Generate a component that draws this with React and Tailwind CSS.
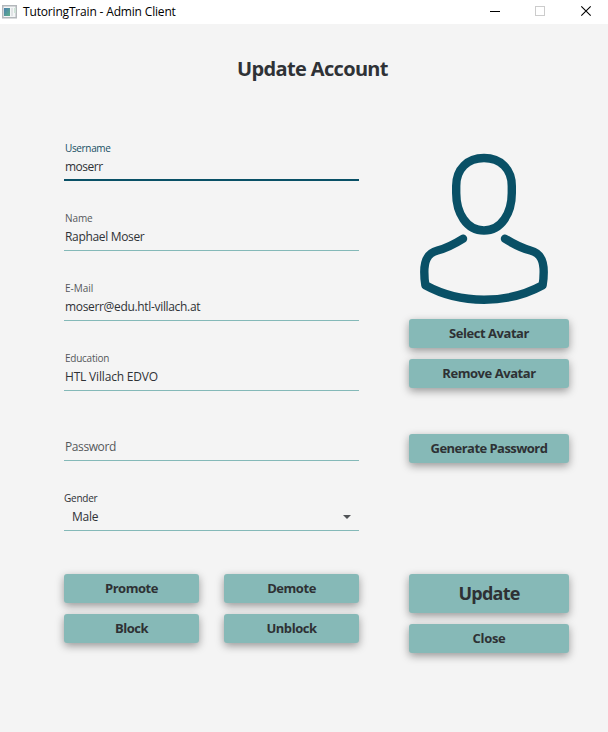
import React from "react";

function Field({ label, labelClass = "", value, valueClass = "tracking-[-0.33px]", focused = false }) {
  return (
    <div
      className={
        "flex h-[70px] flex-col justify-end " +
        (focused ? "border-b-2 border-[#095066]" : "border-b border-[#84b9b8]")
      }
    >
      {label && (
        <div className={"h-[12px] whitespace-nowrap pl-px text-[10px] leading-[12px] " + labelClass}>{label}</div>
      )}
      <div
        className={
          "mt-[4px] whitespace-nowrap pl-px text-[12px] leading-[18px] " +
          (focused ? "h-[21px] " : "h-[22px] ") +
          valueClass
        }
      >
        {value}
      </div>
    </div>
  );
}

function Button({ children, className = "h-[29px] text-[13px] tracking-[-0.45px]" }) {
  return (
    <button
      className={
        "flex w-full items-center justify-center whitespace-nowrap rounded-[3px] bg-[#86b9b7] font-bold text-[#2e3134] shadow-[0_3px_9px_rgba(0,0,0,0.38)] " +
        className
      }
    >
      {children}
    </button>
  );
}

function AppIcon() {
  return (
    <svg width="16" height="14" viewBox="0 0 16 14" className="block">
      <defs>
        <linearGradient id="pane" x1="0" y1="0" x2="1" y2="1">
          <stop offset="0" stopColor="#4a7fae" />
          <stop offset="1" stopColor="#5fb08a" />
        </linearGradient>
      </defs>
      <rect x="0.75" y="0.75" width="13.5" height="12" fill="#f4f6f7" stroke="#b3b7bb" strokeWidth="1.5" />
      <rect x="2" y="3" width="6" height="8" fill="url(#pane)" />
      <rect x="9" y="3" width="2" height="8" fill="#e1e4e6" />
      <rect x="12" y="3" width="2" height="5" fill="#cfe3d8" />
    </svg>
  );
}

function TitleBar() {
  return (
    <header className="flex h-6 items-center bg-white pl-[2px] text-[12px] text-black">
      <AppIcon />
      <span className="ml-[5px] whitespace-nowrap leading-[16px] tracking-[-0.17px]">TutoringTrain - Admin Client</span>
      <svg width="118" height="24" viewBox="0 0 118 24" className="ml-auto block" fill="none">
        <path d="M0 11.5h10" stroke="#000" />
        <rect x="45.5" y="6.5" width="9" height="9" stroke="#ccc" />
        <path d="M91.3 6.3l9.4 9.4M100.7 6.3l-9.4 9.4" stroke="#000" strokeWidth="1.1" />
      </svg>
    </header>
  );
}

function Avatar() {
  return (
    <svg
      width="160"
      height="160"
      viewBox="409 149 160 160"
      className="block"
      fill="none"
      stroke="#095066"
      strokeWidth="8.4"
      strokeLinecap="round"
      strokeLinejoin="round"
    >
      <path d="M484 158C500.500 158 511.800 169 511.800 186V193C511.800 213 501.500 230.500 484 230.500S456.200 213 456.200 193V186C456.200 169 467.500 158 484 158Z" />
      <path d="M463 238.700C455 243.700 447 248 437.500 250.500C426 253.500 424.300 263 424.300 272C424.300 277 424.700 281.500 425.400 285.300C443 295 463 299.700 484 299.700S525 295 542.600 285.300C543.300 281.500 543.700 277 543.700 272C543.700 263 542 253.500 530.500 250.500C521 248 513 243.700 505 238.700" />
    </svg>
  );
}

export default function App() {
  return (
    <div className="h-[732px] w-[608px] overflow-hidden bg-[#f4f4f4] font-['Open_Sans','Noto_Sans',sans-serif] text-[#2f3236]">
      <TitleBar />
      <h1 className="mt-[31px] pl-[17px] text-center text-[20px] font-bold leading-[28px] tracking-[-0.65px]">Update Account</h1>
      <main className="mt-[28px] flex gap-[50px] pl-[64px]">
        <section className="w-[295px]">
          <Field
            label="Username"
            labelClass="text-[#174f64] tracking-[-0.35px]"
            value="moserr"
            valueClass="tracking-[-0.5px]"
            focused
          />
          <Field label="Name" labelClass="text-[#55585b] tracking-[-0.1px]" value="Raphael Moser" />
          <Field label="E-Mail" labelClass="text-[#55585b]" value="moserr@edu.htl-villach.at" />
          <Field
            label="Education"
            labelClass="text-[#55585b] tracking-[-0.25px]"
            value="HTL Villach EDVO"
            valueClass="tracking-[-0.18px]"
          />
          <Field value="Password" valueClass="text-[#55585b] tracking-[-0.4px]" />
          <div className="flex h-[70px] flex-col justify-end border-b border-[#84b9b8]">
            <div className="h-[12px] text-[10px] leading-[12px] tracking-[-0.25px]">Gender</div>
            <div className="mt-[4px] flex h-[22px] justify-between pl-[8px] pr-[8px] text-[12px] leading-[18px] tracking-[-0.25px]">
              <span>Male</span>
              <svg width="8" height="4" viewBox="0 0 8 4" className="mt-[7px] block">
                <path d="M0 0h8L4 4z" fill="#505356" />
              </svg>
            </div>
          </div>
          <div className="mt-[43px] grid grid-cols-2 gap-x-[25px] gap-y-[11px]">
            <Button>Promote</Button>
            <Button>Demote</Button>
            <Button>Block</Button>
            <Button>Unblock</Button>
          </div>
        </section>
        <section className="w-[160px]">
          <div className="mt-[38px]">
            <Avatar />
          </div>
          <div className="mt-[10px] flex flex-col gap-[11px]">
            <Button>Select Avatar</Button>
            <Button>Remove Avatar</Button>
          </div>
          <div className="mt-[46px]">
            <Button className="h-[29px] text-[13px] tracking-[-0.54px]">Generate Password</Button>
          </div>
          <div className="mt-[111px] flex flex-col gap-[11px]">
            <Button className="h-[39px] text-[18px] tracking-[-0.75px]">Update</Button>
            <Button className="h-[29px] text-[13px] tracking-[-0.3px]">Close</Button>
          </div>
        </section>
      </main>
    </div>
  );
}
